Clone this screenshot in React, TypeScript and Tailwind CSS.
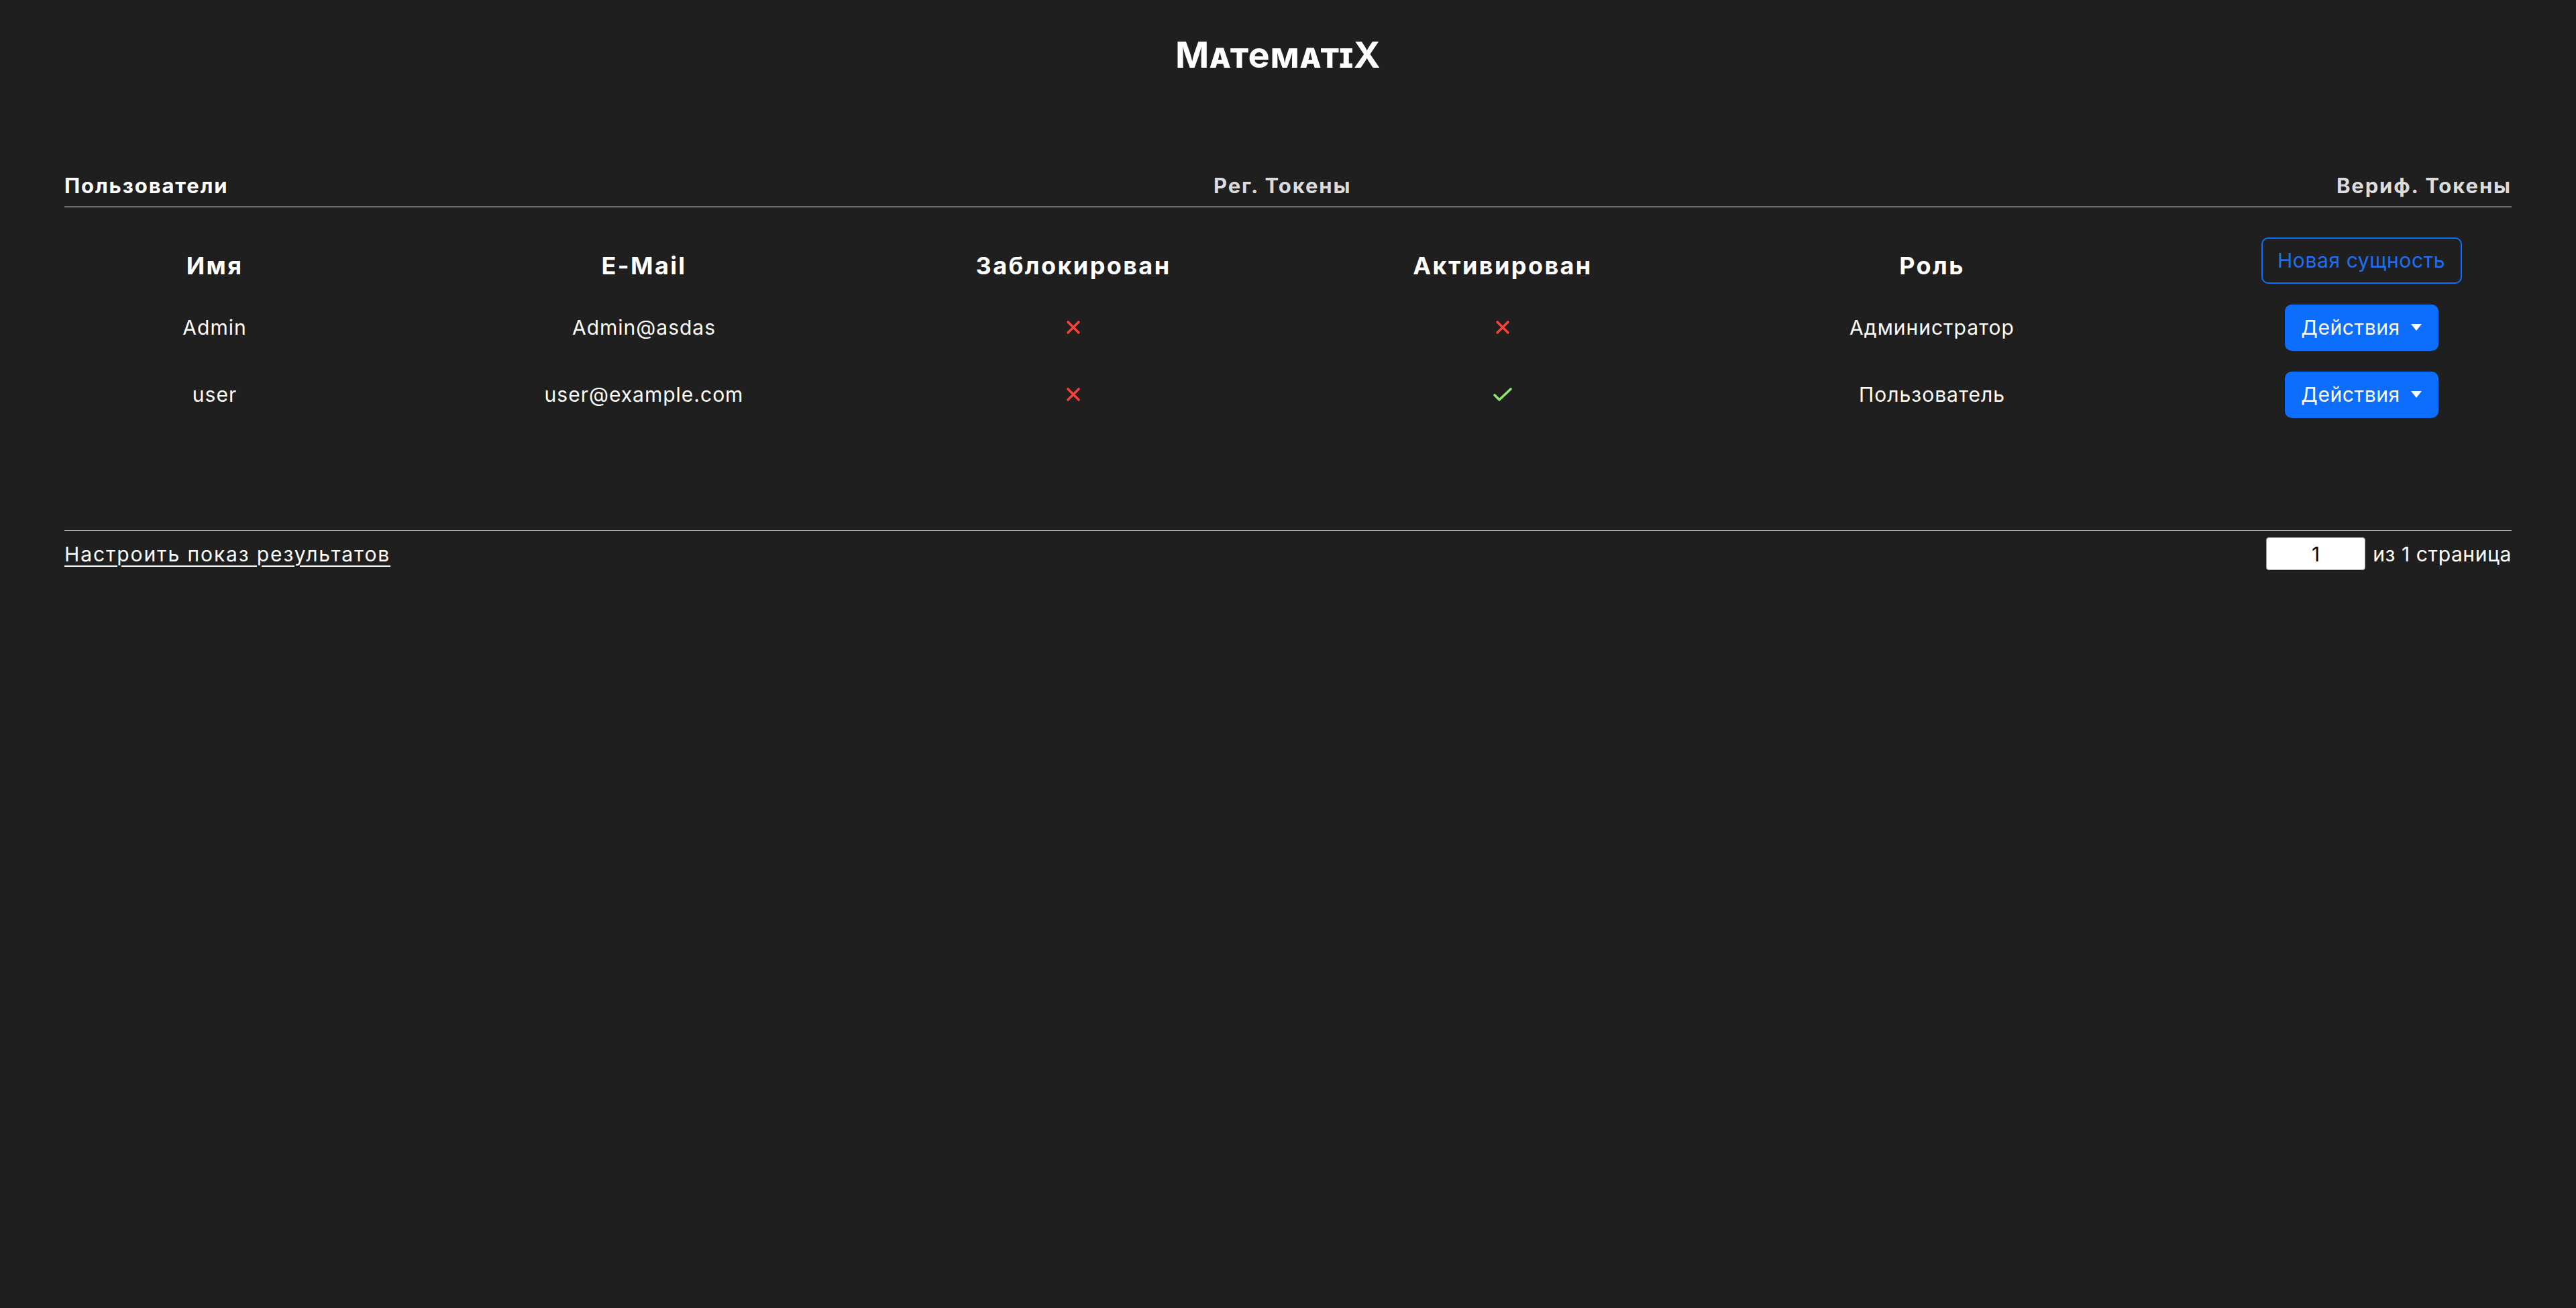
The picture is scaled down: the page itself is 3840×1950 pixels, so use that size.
const users = [
  { name: "Admin", email: "Admin@asdas", blocked: false, active: false, role: "Администратор" },
  { name: "user", email: "user@example.com", blocked: false, active: true, role: "Пользователь" },
];

const Cross = () => (
  <svg width="22" height="22" viewBox="0 0 22 22" className="block">
    <path d="M3 3 L19 19 M19 3 L3 19" stroke="#f8413a" strokeWidth="3.6" strokeLinecap="round" />
  </svg>
);

const Check = () => (
  <svg width="30" height="22" viewBox="0 0 30 22" className="block">
    <path d="M3 12 L10 19 L27 3" stroke="#8ee66a" strokeWidth="3.6" strokeLinecap="round" strokeLinejoin="round" fill="none" />
  </svg>
);

const ActionsButton = () => (
  <button className="h-[69px] w-[229px] rounded-[10px] bg-[#0d6efd] text-white text-[30px] tracking-[0.6px] flex items-center justify-center gap-[16px] leading-none">
    <span>Действия</span>
    <svg width="16" height="10" viewBox="0 0 16 10">
      <path d="M0 0 L16 0 L8 10 Z" fill="white" />
    </svg>
  </button>
);

const App: React.FC = () => {
  return (
    <div className="min-h-screen bg-[#1f1f1f] text-white font-['Inter','Noto_Sans',sans-serif] pb-10">
      <h1 className="pt-[55px] h-[109px] text-center text-[54px] font-bold leading-none [font-variant:small-caps] tracking-[0.5px] pr-[30px]">
        MatematiX
      </h1>

      {/* tabs */}
      <nav className="mt-[152px] mx-[96px] flex justify-between border-b border-white pb-[16px] text-[31px] font-bold leading-none tracking-[1.9px]">
        <a className="text-white">Пользователи</a>
        <a className="text-[#dcdcdc]">Рег. Токены</a>
        <a className="text-[#dcdcdc]">Вериф. Токены</a>
      </nav>

      <div className="mt-[29px]">
        <div className="grid grid-cols-6 h-[100px] items-center text-center">
          {["Имя", "E-Mail", "Заблокирован", "Активирован", "Роль"].map((h) => (
            <div key={h} className="pt-[16px] text-[36px] font-bold leading-none tracking-[2.4px]">
              {h}
            </div>
          ))}
          <div className="flex justify-center">
            <button className="h-[69px] w-[299px] rounded-[10px] border-2 border-[#0d6efd] text-[#1f6ff5] text-[30px] leading-none tracking-[0.6px]">
              Новая сущность
            </button>
          </div>
        </div>

        {users.map((u) => (
          <div key={u.email} className="grid grid-cols-6 h-[100px] items-center text-center text-[30px] leading-none tracking-[1px]">
            <div>{u.name}</div>
            <div>{u.email}</div>
            <div className="flex justify-center">{u.blocked ? <Check /> : <Cross />}</div>
            <div className="flex justify-center">{u.active ? <Check /> : <Cross />}</div>
            <div>{u.role}</div>
            <div className="flex justify-center">
              <ActionsButton />
            </div>
          </div>
        ))}
      </div>

      <footer className="mt-[152px] mx-[96px] border-t border-white pt-[10px] flex items-center justify-between text-[30px] leading-none">
        <a href="#" className="underline underline-offset-[6px] decoration-2 tracking-[1.9px]">
          Настроить показ результатов
        </a>
        <div className="flex items-center gap-[11px]">
          <input
            defaultValue="1"
            className="h-[49px] w-[148px] rounded-[4px] border border-[#9a9a9a] bg-white text-center text-[30px] text-black"
          />
          <span className="tracking-[0.6px]">из 1 страница</span>
        </div>
      </footer>
    </div>
  );
};

export default App;
